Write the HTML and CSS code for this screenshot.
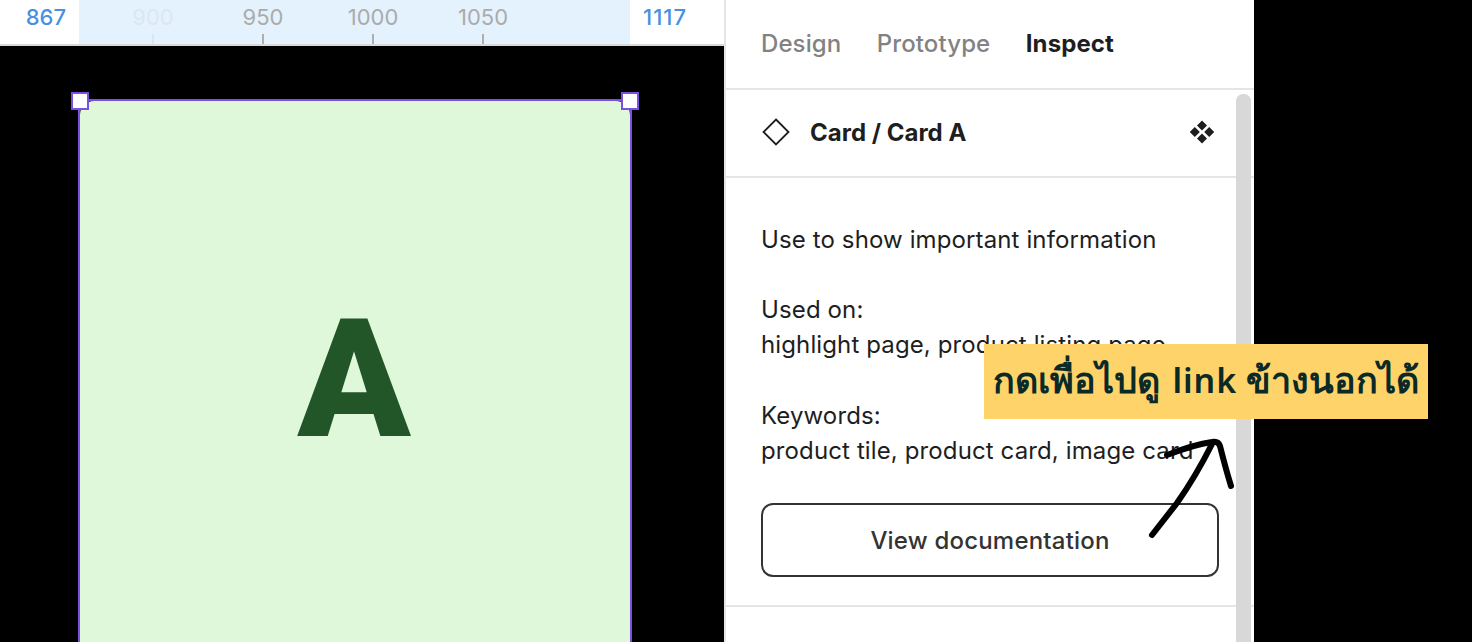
FILE: index.html
```html
<!DOCTYPE html>
<html lang="th">
<head>
<meta charset="utf-8">
<title>Inspect</title>
<link rel="stylesheet" href="styles.css">
</head>
<body>
<div class="stage">
  <div class="canvas">
    <div class="ruler">
      <div class="edge edge-start">867</div>
      <div class="band">
        <div class="mark mark-faint"><span>900</span><i></i></div>
        <div class="mark"><span>950</span><i></i></div>
        <div class="mark"><span>1000</span><i></i></div>
        <div class="mark"><span>1050</span><i></i></div>
      </div>
      <div class="edge edge-end">1117</div>
    </div>
    <div class="frame">
      <span class="handle handle-left"></span>
      <span class="handle handle-right"></span>
      <div class="card"><span class="letter">A</span></div>
    </div>
  </div>
  <aside class="panel">
    <nav class="tabs">
      <span class="tab">Design</span>
      <span class="tab">Prototype</span>
      <span class="tab tab-active">Inspect</span>
    </nav>
    <div class="component">
      <svg class="icon-diamond" width="28" height="28" viewBox="0 0 28 28"><path d="M14 1.5 26.5 14 14 26.5 1.5 14Z" fill="none" stroke="#1e1e1e" stroke-width="1.8"/></svg>
      <span class="component-name">Card / Card A</span>
      <svg class="icon-components" width="24" height="24" viewBox="0 0 24 24"><path d="M12 0.5 17 5.5 12 10.5 7 5.5ZM4.8 7 9.8 12 4.8 17 -0.2 12ZM19.2 7 24.2 12 19.2 17 14.2 12ZM12 13.5 17 18.5 12 23.5 7 18.5Z" fill="#1e1e1e"/></svg>
    </div>
    <div class="details">
      <p class="para">Use to show important information</p>
      <p class="para para-wide">Used on:<br>highlight page, product listing page</p>
      <p class="para">Keywords:<br>product tile, product card, image card</p>
      <a class="doc-button">View documentation</a>
    </div>
    <div class="scrollbar"></div>
  </aside>
</div>
<div class="callout">กดเพื่อไปดู <span class="callout-latin">link</span> ข้างนอกได้</div>
<svg class="arrow" width="1472" height="642" viewBox="0 0 1472 642">
  <path d="M1152 535L1177 503Q1196 476 1212 444" fill="none" stroke="#000" stroke-width="6" stroke-linecap="round"/>
  <path d="M1167 455C1180 450 1198 444 1212 442C1217 441 1219 443 1220 446C1223 458 1227 473 1231 486" fill="none" stroke="#000" stroke-width="6" stroke-linecap="round" stroke-linejoin="round"/>
</svg>
</body>
</html>
```
FILE: styles.css
```css
* { box-sizing: border-box; }
html, body { margin: 0; height: 100%; }
body {
  background: #000;
  overflow: hidden;
  font-family: Inter, "Noto Sans", sans-serif;
  color: #1e1e1e;
}
.stage { display: flex; height: 642px; overflow: hidden; }

.canvas { width: 724px; flex: none; }
.ruler {
  display: flex;
  height: 46px;
  background: #fff;
  border-bottom: 2px solid #d9d9d9;
  font-size: 22px;
}
.edge { color: #4a8fe0; line-height: 34px; font-weight: 500; }
.edge-start { width: 79px; text-align: right; padding-right: 13px; }
.edge-end { flex: 1; padding-left: 13px; letter-spacing: 1px; }
.band {
  width: 551px;
  display: flex;
  padding-left: 19px;
  background: #e4f2fe;
}
.mark {
  width: 110px;
  display: flex;
  flex-direction: column;
  align-items: center;
  color: #ababab;
  line-height: 34px;
}
.mark i { width: 2px; height: 10px; background: #aeaeae; }
.mark-faint { color: #dde6ef; }
.mark-faint i { background: #dde6ee; }

.frame {
  position: relative;
  width: 554px;
  height: 543px;
  margin: 53px 0 0 78px;
  border: 2px solid #7c4fe0;
  border-bottom: 0;
  background: #000;
}
.card {
  height: 100%;
  background: #e0f8da;
  border-radius: 14px 14px 0 0;
  display: flex;
  justify-content: center;
  padding: 179px 2px 0 0;
}
.letter {
  font-family: Roboto, "Liberation Sans", sans-serif;
  font-weight: 900;
  font-size: 166px;
  line-height: 200px;
  color: #225528;
  height: 200px;
}
.handle {
  position: absolute;
  top: -9px;
  width: 18px;
  height: 18px;
  background: #fff;
  border: 2px solid #7c4fe0;
}
.handle-left { left: -9px; }
.handle-right { right: -9px; }

.panel {
  position: relative;
  width: 530px;
  flex: none;
  background: #fff;
  border-left: 2px solid #e5e5e5;
}
.tabs {
  display: flex;
  gap: 35.5px;
  align-items: center;
  height: 90px;
  padding-left: 35px;
  border-bottom: 2px solid #e5e5e5;
  font-size: 24px;
  font-weight: 500;
  letter-spacing: 0.1px;
  padding-bottom: 1px;
}
.tab { color: #828282; }
.tab-active { color: #1e1e1e; font-weight: 700; }

.component {
  display: flex;
  align-items: center;
  height: 88px;
  padding: 0 40px 2px 36px;
  border-bottom: 2px solid #e5e5e5;
}
.component-name { flex: 1; margin-left: 20px; font-size: 24px; font-weight: 700; }

.details {
  padding: 44px 35px 28px;
  height: 429px;
  border-bottom: 2px solid #e5e5e5;
  font-size: 24px;
  line-height: 35px;
  letter-spacing: 0.12px;
}
.para { margin: 0 0 35px; }
.para-wide { margin-bottom: 36px; }
.doc-button {
  display: flex;
  align-items: center;
  justify-content: center;
  width: 458px;
  height: 74px;
  border: 2px solid #333;
  border-radius: 12px;
  color: #333;
  font-weight: 500;
  letter-spacing: 0.2px;
}
.scrollbar {
  position: absolute;
  top: 94px;
  right: 3px;
  width: 15px;
  height: 560px;
  background: #d8d8d8;
  border-radius: 7px 7px 0 0;
}

.callout {
  position: absolute;
  left: 984px;
  top: 344px;
  width: 444px;
  height: 75px;
  padding-left: 9px;
  background: #fed369;
  color: #0a2a28;
  font-family: "Noto Sans", "DejaVu Sans", sans-serif;
  font-weight: 700;
  font-size: 36px;
  line-height: 72px;
  white-space: nowrap;
}
.callout-latin { margin: 0 -1px 0 3px; font-size: 34px; font-weight: 600; letter-spacing: 1px; }
.arrow { position: absolute; left: 0; top: 0; pointer-events: none; }
```
